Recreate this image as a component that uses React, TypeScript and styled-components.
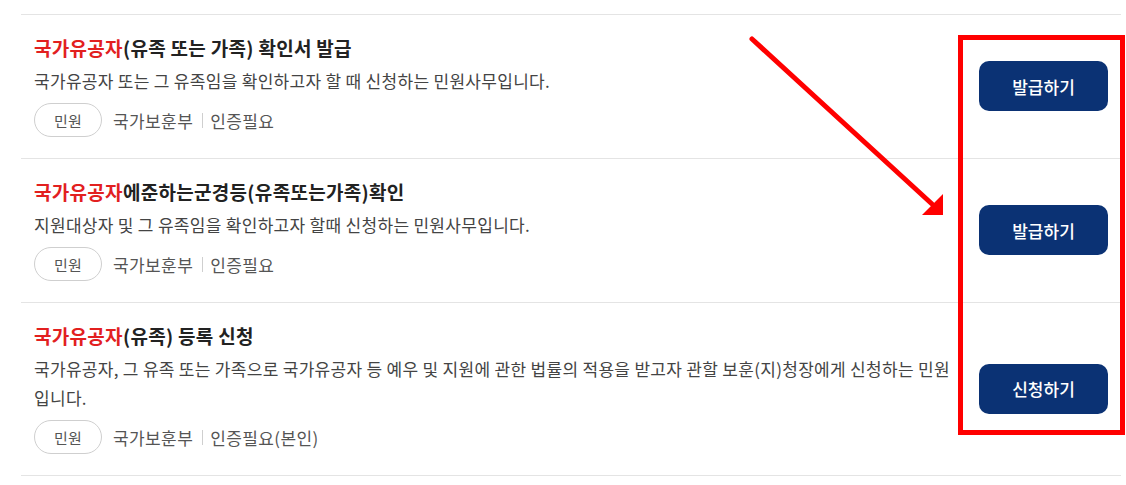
import React from 'react';
import styled, { createGlobalStyle } from 'styled-components';

const GlobalStyle = createGlobalStyle`
  html, body {
    margin: 0;
    padding: 0;
    background: #fff;
  }
  body {
    font-family: "Noto Sans CJK KR", "Noto Sans", sans-serif;
  }
`;

interface Service {
  highlight: string;
  rest: string;
  desc: string;
  org: string;
  auth: string;
  action: string;
}

const services: Service[] = [
  {
    highlight: '국가유공자',
    rest: '(유족 또는 가족) 확인서 발급',
    desc: '국가유공자 또는 그 유족임을 확인하고자 할 때 신청하는 민원사무입니다.',
    org: '국가보훈부',
    auth: '인증필요',
    action: '발급하기'
  },
  {
    highlight: '국가유공자',
    rest: '에준하는군경등(유족또는가족)확인',
    desc: '지원대상자 및 그 유족임을 확인하고자 할때 신청하는 민원사무입니다.',
    org: '국가보훈부',
    auth: '인증필요',
    action: '발급하기'
  },
  {
    highlight: '국가유공자',
    rest: '(유족) 등록 신청',
    desc: '국가유공자, 그 유족 또는 가족으로 국가유공자 등 예우 및 지원에 관한 법률의 적용을 받고자 관할 보훈(지)청장에게 신청하는 민원입니다.',
    org: '국가보훈부',
    auth: '인증필요(본인)',
    action: '신청하기'
  }
];

const Page = styled.div`
  position: relative;
  height: 485px;
  overflow: hidden;
  padding: 14px 5px 0 21px;
  box-sizing: border-box;
`;

const List = styled.ul`
  list-style: none;
  margin: 0;
  padding: 0;
  border-top: 1px solid #e4e4e4;
`;

const Row = styled.li`
  display: flex;
  align-items: center;
  gap: 24px;
  padding: 20px 13px 21px;
  border-bottom: 1px solid #e4e4e4;
`;

const Info = styled.div`
  flex: 1;
  min-width: 0;
`;

const Title = styled.h3`
  margin: 0;
  font-size: 19px;
  font-weight: 700;
  letter-spacing: 0.3px;
  line-height: 25px;
  color: #222;
`;

const Mark = styled.span`
  color: #e2201f;
`;

const Desc = styled.p`
  margin: 6px 0 0;
  font-size: 17px;
  letter-spacing: 0.3px;
  line-height: 29px;
  color: #444;
`;

const Meta = styled.div`
  display: flex;
  align-items: center;
  height: 34px;
  margin-top: 8px;
  font-size: 17px;
  letter-spacing: 0.4px;
  color: #555;
`;

const Tag = styled.span`
  display: inline-flex;
  align-items: center;
  justify-content: center;
  width: 68px;
  height: 34px;
  box-sizing: border-box;
  border: 1px solid #cfcfcf;
  border-radius: 17px;
  font-size: 15px;
  letter-spacing: 0.3px;
  color: #555;
`;

const Org = styled.span`
  margin-left: 11px;
`;

const Sep = styled.span`
  width: 1px;
  height: 15px;
  background: #cfcfcf;
  margin: 0 7px 0 9px;
`;

const ActionButton = styled.button`
  flex-shrink: 0;
  width: 129px;
  height: 50px;
  border: none;
  border-radius: 10px;
  background: #0b3274;
  color: #fff;
  font-family: inherit;
  font-size: 17px;
  font-weight: 500;
  cursor: pointer;
`;

const HighlightBox = styled.div`
  position: absolute;
  left: 958px;
  top: 35px;
  width: 167px;
  height: 400px;
  box-sizing: border-box;
  border: 5px solid #f00;
  pointer-events: none;
`;

const ArrowLayer = styled.svg`
  position: absolute;
  left: 0;
  top: 0;
  pointer-events: none;
`;

export default function App(): React.ReactElement {
  return (
    <Page>
      <GlobalStyle />
      <List>
        {services.map((s, i) => (
          <Row key={i}>
            <Info>
              <Title>
                <Mark>{s.highlight}</Mark>
                {s.rest}
              </Title>
              <Desc>{s.desc}</Desc>
              <Meta>
                <Tag>민원</Tag>
                <Org>{s.org}</Org>
                <Sep />
                <span>{s.auth}</span>
              </Meta>
            </Info>
            <ActionButton>{s.action}</ActionButton>
          </Row>
        ))}
      </List>
      <HighlightBox />
      <ArrowLayer width={1126} height={485} viewBox="0 0 1126 485">
        <line x1={752} y1={39} x2={932} y2={204} stroke="#f00" strokeWidth={5} strokeLinecap="round" />
        <polygon points="943,215 922,215 943,194" fill="#f00" />
      </ArrowLayer>
    </Page>
  );
}
